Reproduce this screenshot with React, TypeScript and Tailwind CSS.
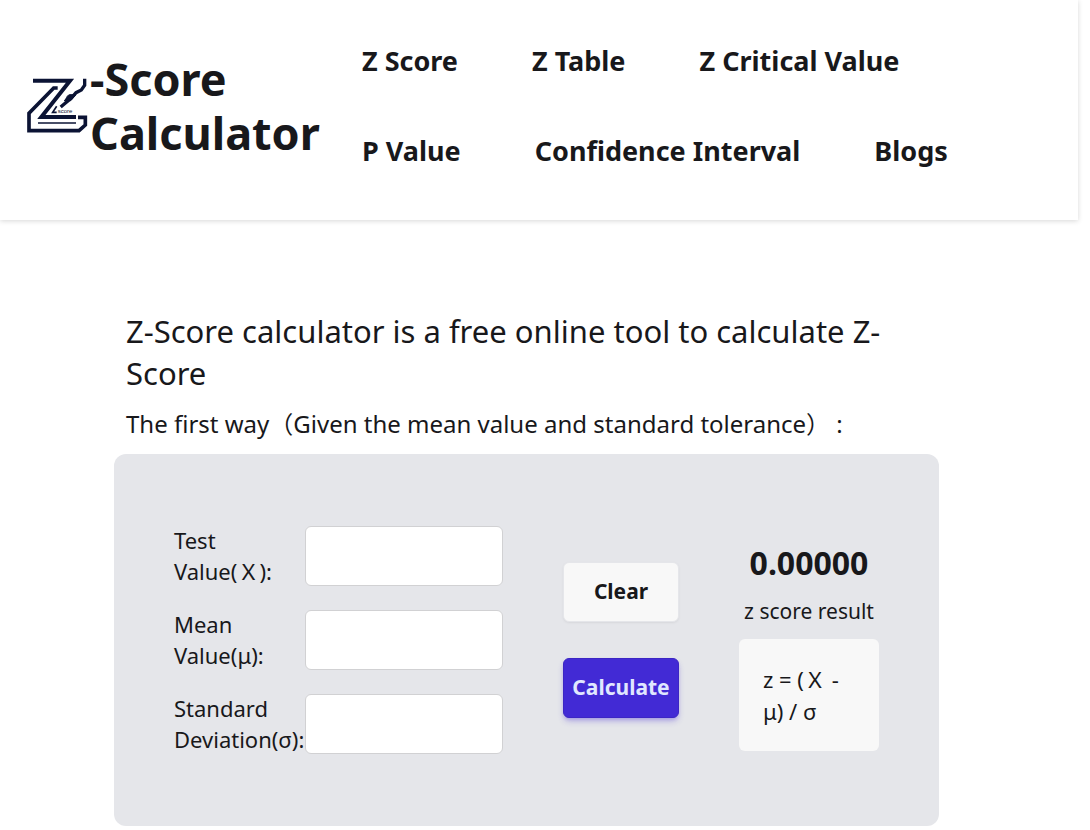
import React, { useState } from 'react';

const navLinks = [
  { label: 'Z Score', href: '#z-score' },
  { label: 'Z Table', href: '#z-table' },
  { label: 'Z Critical Value', href: '#z-critical-value' },
  { label: 'P Value', href: '#p-value' },
  { label: 'Confidence Interval', href: '#confidence-interval' },
  { label: 'Blogs', href: '#blogs' },
];

const fields = [
  { id: 'x', first: 'Test', second: 'Value(Ｘ):' },
  { id: 'mean', first: 'Mean', second: 'Value(μ):' },
  { id: 'sd', first: 'Standard', second: 'Deviation(σ):' },
];

const Logo: React.FC = () => (
  <svg viewBox="18 36 186 168" className="w-[62px] h-14 shrink-0" fill="none" stroke="#0b1334" aria-hidden="true">
    {/* outer Z and base */}
    <path d="M39 44H150L64 153H168" strokeWidth="12" />
    <path d="M113 66H101L27 142V194H177L196 177V154H174" strokeWidth="11" />
    <path d="M54 171H168" strokeWidth="5" />
    {/* tail */}
    <path d="M194 38V58L184 72L168 80L154 96L122 123" strokeWidth="10" />
    <path d="M140 92L148 86H168L152 104H132" fill="#0b1334" strokeWidth="3" />
    <path d="M110 121L98 139H110" strokeWidth="5" />
    <text x="113" y="141" fontSize="18" fill="#0b1334" stroke="none" fontFamily="Liberation Sans, sans-serif">score</text>
  </svg>
);

const Header: React.FC = () => (
  <header className="flex items-center bg-white pt-4 pr-24 pb-6 pl-6 shadow-[0_1px_5px_rgba(0,0,0,0.16)]">
    <a href="#home" className="flex w-[338px] shrink-0 items-center pl-0.5">
      <Logo />
      <span className="pl-0.5 text-[45px] leading-[54px] font-bold">-Score Calculator</span>
    </a>
    <nav className="flex flex-1 flex-wrap gap-x-[74px]">
      {navLinks.map((link) => (
        <a key={link.label} href={link.href} className="text-[27px] leading-[90px] font-bold whitespace-nowrap">
          {link.label}
        </a>
      ))}
    </nav>
  </header>
);

const Calculator: React.FC = () => {
  const [values, setValues] = useState<Record<string, string>>({ x: '', mean: '', sd: '' });
  const [result, setResult] = useState(0);

  const clear = () => {
    setValues({ x: '', mean: '', sd: '' });
    setResult(0);
  };

  const calculate = () => {
    const z = (Number(values.x) - Number(values.mean)) / Number(values.sd);
    setResult(Number.isFinite(z) ? z : 0);
  };

  return (
    <div className="flex items-center gap-15 rounded-xl bg-[#e5e6ea] px-15 py-[71px]">
      <div className="flex flex-1 flex-col gap-[22px]">
        {fields.map((field) => (
          <div key={field.id} className="flex items-center">
            <label htmlFor={field.id} className="w-[131px] shrink-0 text-[22px] leading-[31px] whitespace-nowrap">
              {field.first}
              <br />
              {field.second}
            </label>
            <input
              id={field.id}
              type="text"
              value={values[field.id]}
              onChange={(e) => setValues({ ...values, [field.id]: e.target.value })}
              className="h-15 w-full min-w-0 rounded-md border border-[#d1d1d3] bg-white px-4 text-[22px]"
            />
          </div>
        ))}
      </div>

      <div className="flex w-[116px] flex-col gap-9">
        <button onClick={clear} className="h-15 rounded-md border border-[#e5e6ea] bg-[#f8f8f8] text-[21px] font-bold shadow-sm shadow-black/5">
          Clear
        </button>
        <button onClick={calculate} className="h-15 rounded-md border border-[#3c26c4] bg-[#422ad5] text-[21px] font-bold text-[#e0e7ff] shadow-md shadow-[#422ad5]/30">
          Calculate
        </button>
      </div>

      <div className="flex w-[140px] flex-col items-center">
        <output className="text-[32px] leading-[66px] font-bold">{result.toFixed(5)}</output>
        <p className="text-[21px] leading-[31px] whitespace-nowrap">z score result</p>
        <div className="mt-3 w-full rounded-md bg-[#f8f8f8] p-6 text-[22px] leading-8">
          z = (Ｘ -
          <br />
          μ) / σ
        </div>
      </div>
    </div>
  );
};

const App: React.FC = () => {
  return (
    <div className="min-h-screen overflow-hidden bg-white pr-3 font-['Noto_Sans','Noto_Sans_CJK_SC',sans-serif] text-[#18181b]">
      <Header />
      <main className="mr-[139px] ml-[114px] pt-[90px]">
        <h1 className="px-3 text-[31px] leading-[42px]">Z-Score calculator is a free online tool to calculate Z-Score</h1>
        <h2 className="px-3 pt-3 pb-3 text-[24px] leading-9 whitespace-nowrap">
          The first way（Given the mean value and standard tolerance） :
        </h2>
        <Calculator />
      </main>
    </div>
  );
};

export default App;
